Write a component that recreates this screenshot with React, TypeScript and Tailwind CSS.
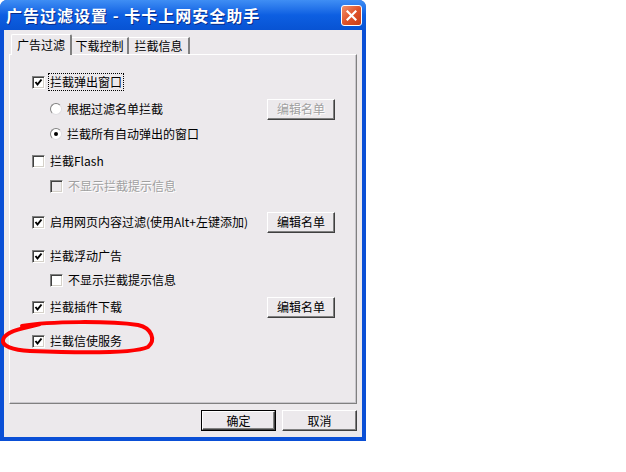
import React from 'react';

const FONT = "font-['Noto_Sans_CJK_SC','Noto_Sans',sans-serif]";

type BoxProps = { checked?: boolean; disabled?: boolean };

const CheckBox: React.FC<BoxProps> = ({ checked, disabled }) => (
  <span
    className={`flex items-center justify-center w-[13px] h-[13px] shrink-0 border border-t-[#808080] border-l-[#808080] border-r-white border-b-white shadow-[inset_1px_1px_0_#404040,inset_-1px_-1px_0_#d4d0c8] ${disabled ? 'bg-[#ece9ec]' : 'bg-white'}`}
  >
    {checked && (
      <svg width="9" height="9" viewBox="0 0 9 9">
        <polyline points="1.5,4 3.5,6.5 7.5,1.5" fill="none" stroke="#000" strokeWidth="2" />
      </svg>
    )}
  </span>
);

const Radio: React.FC<BoxProps> = ({ checked }) => (
  <span className="flex items-center justify-center w-[12px] h-[12px] shrink-0 rounded-full bg-white border border-t-[#808080] border-l-[#808080] border-r-[#e0dfe3] border-b-[#e0dfe3]">
    {checked && <span className="w-[4px] h-[4px] rounded-full bg-black" />}
  </span>
);

const Btn: React.FC<{ label: string; disabled?: boolean; def?: boolean; w: string }> = ({ label, disabled, def, w }) => (
  <div className={`${w} h-[21px] ${def ? 'border border-black' : ''}`}>
    <div
      className={`w-full h-full flex items-center justify-center bg-[#ece9ec] border border-t-white border-l-white border-r-[#404040] border-b-[#404040] shadow-[inset_-1px_-1px_0_#808080] text-[12px] ${disabled ? 'text-[#a0a0a0] [text-shadow:1px_1px_0_#fff]' : 'text-black'}`}
    >
      {label}
    </div>
  </div>
);

const Row: React.FC<{ mt: string; indent?: boolean; children: React.ReactNode; button?: React.ReactNode }> = ({ mt, indent, children, button }) => (
  <div className={`${mt} h-[20px] flex items-center ${indent ? 'pl-[40px]' : 'pl-[22px]'} pr-[21px]`}>
    <div className="flex items-center gap-[5px] flex-1">{children}</div>
    {button}
  </div>
);

export default function App() {
  return (
    <div className={`w-[626px] h-[472px] bg-white relative ${FONT} text-[12px] leading-none`}>
      <div className="w-[366px] h-[441px] flex flex-col rounded-t-[7px] bg-[#0a4fd6]">
        {/* title bar */}
        <div className="h-[30px] shrink-0 flex items-center justify-between pl-[6px] pr-[4px] rounded-t-[7px] bg-gradient-to-b from-[#3f8ef4] via-[#0d5fe2] to-[#0853d3]">
          <span className="text-white font-bold text-[16px] tracking-[1px] [text-shadow:1px_1px_0_#0a2c8a]">
            广告过滤设置 - 卡卡上网安全助手
          </span>
          <div className="w-[21px] h-[21px] rounded-[3px] border border-white bg-gradient-to-br from-[#f0906a] via-[#e0532a] to-[#c83d16] flex items-center justify-center">
            <svg width="11" height="11" viewBox="0 0 11 11">
              <path d="M1.5 1.5 L9.5 9.5 M9.5 1.5 L1.5 9.5" stroke="#fff" strokeWidth="2.2" strokeLinecap="square" />
            </svg>
          </div>
        </div>

        {/* client */}
        <div className="flex-1 mx-[4px] mb-[4px] bg-[#ece9ec] flex flex-col px-[5px] relative">
          {/* tabs */}
          <div className="mt-[4px] h-[20px] flex items-end pl-[2px] relative z-10">
            <div className="h-[21px] -mb-[1px] px-[5px] w-[61px] flex items-center justify-center bg-[#ece9ec] border-t border-l border-white border-r-2 border-r-[#808080] rounded-t-[2px]">
              广告过滤
            </div>
            <div className="h-[17px] w-[57px] flex items-center justify-center border-t border-white border-r-2 border-r-[#808080]">
              下载控制
            </div>
            <div className="h-[17px] w-[61px] flex items-center justify-center border-t border-white border-r-2 border-r-[#808080]">
              拦截信息
            </div>
          </div>

          {/* panel */}
          <div className="h-[350px] border border-t-white border-l-white border-r-[#808080] border-b-[#808080] shadow-[inset_-1px_-1px_0_#c8c6cb] flex flex-col relative">
            <Row mt="mt-[17px]">
              <CheckBox checked />
              <span className="border border-dotted border-black px-[1px] py-[2px] -ml-[2px]">拦截弹出窗口</span>
            </Row>
            <Row mt="mt-[7px]" indent button={<Btn label="编辑名单" disabled w="w-[68px]" />}>
              <Radio />
              <span>根据过滤名单拦截</span>
            </Row>
            <Row mt="mt-[5px]" indent>
              <Radio checked />
              <span>拦截所有自动弹出的窗口</span>
            </Row>
            <Row mt="mt-[7px]">
              <CheckBox />
              <span>拦截Flash</span>
            </Row>
            <Row mt="mt-[5px]" indent>
              <CheckBox disabled />
              <span className="text-[#a0a0a0] [text-shadow:1px_1px_0_#fff]">不显示拦截提示信息</span>
            </Row>
            <Row mt="mt-[16px]" button={<Btn label="编辑名单" w="w-[68px]" />}>
              <CheckBox checked />
              <span>启用网页内容过滤(使用Alt+左键添加)</span>
            </Row>
            <Row mt="mt-[14px]">
              <CheckBox checked />
              <span>拦截浮动广告</span>
            </Row>
            <Row mt="mt-[4px]" indent>
              <CheckBox />
              <span>不显示拦截提示信息</span>
            </Row>
            <Row mt="mt-[7px]" button={<Btn label="编辑名单" w="w-[68px]" />}>
              <CheckBox checked />
              <span>拦截插件下载</span>
            </Row>
            <Row mt="mt-[14px]">
              <CheckBox checked />
              <span>拦截信使服务</span>
            </Row>
          </div>

          {/* bottom buttons */}
          <div className="mt-[6px] flex justify-end gap-[6px]">
            <Btn label="确定" def w="w-[75px]" />
            <Btn label="取消" w="w-[75px]" />
          </div>
        </div>
      </div>

      {/* red marker ellipse drawn over the dialog */}
      <svg className="absolute left-0 top-[318px] pointer-events-none" width="160" height="40" viewBox="0 0 160 40">
        <path
          d="M22 8 C50 3, 110 3, 138 7 C152 10, 156 22, 148 29 C135 35, 80 35, 30 33 C12 32, 2 28, 3 22 C4 16, 14 12, 28 9 L40 6"
          fill="none"
          stroke="#ff0000"
          strokeWidth="4"
          strokeLinecap="round"
        />
      </svg>
    </div>
  );
}
